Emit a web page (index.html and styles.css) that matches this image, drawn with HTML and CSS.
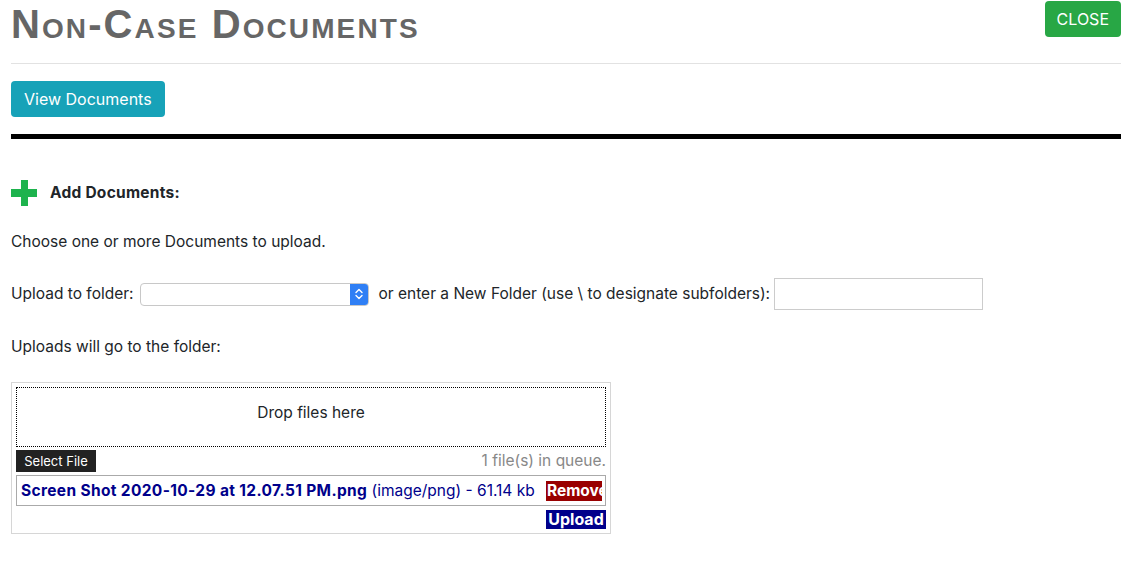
FILE: index.html
```html
<!DOCTYPE html>
<html lang="en">
<head>
  <meta charset="UTF-8" />
  <title>Non-Case Documents</title>
  <link rel="stylesheet" href="styles.css">
</head>
<body>
  <div class="page">
    <div class="header">
      <h1>Non-Case Documents</h1>
      <button class="btn btn-close">CLOSE</button>
    </div>
    <hr class="rule">

    <button class="btn btn-view">View Documents</button>
    <div class="black-bar"></div>

    <div class="add-title">
      <svg class="plus" width="26" height="26" viewBox="0 0 26 26">
        <rect x="10" y="0" width="7" height="26" fill="#1db34d"/>
        <rect x="0" y="9" width="26" height="8" fill="#1db34d"/>
      </svg>
      <span>Add Documents:</span>
    </div>

    <p class="line choose">Choose one or more Documents to upload.</p>

    <div class="folder-row">
      <label>Upload to folder:</label>
      <div class="fake-select">
        <span class="select-arrows">
          <svg width="10" height="14" viewBox="0 0 10 14">
            <path d="M2 5.5 L5 2.5 L8 5.5 M2 8.5 L5 11.5 L8 8.5" fill="none" stroke="#fff" stroke-width="1.4" stroke-linecap="round" stroke-linejoin="round"/>
          </svg>
        </span>
      </div>
      <label class="or-label">or enter a New Folder (use \ to designate subfolders):</label>
      <input type="text" class="new-folder">
    </div>

    <p class="line goes">Uploads will go to the folder:</p>

    <div class="uploader">
      <div class="drop-zone">Drop files here</div>
      <div class="queue-bar">
        <span class="select-file">Select File</span>
        <span class="queue-count">1 file(s) in queue.</span>
      </div>
      <div class="file-row">
        <span class="file-info"><b>Screen Shot 2020-10-29 at 12.07.51 PM.png</b> (image/png) - 61.14 kb</span>
        <span class="remove-btn">Remove</span>
      </div>
      <div class="upload-bar">
        <span class="upload-btn">Upload</span>
      </div>
    </div>
  </div>
</body>
</html>
```

FILE: styles.css
```css
* {
  box-sizing: border-box;
  margin: 0;
  padding: 0;
}

body {
  font-family: Inter, "Liberation Sans", sans-serif;
  font-size: 15.5px;
  line-height: 24px;
  color: #212529;
  background: #fff;
}

.page {
  padding: 0 27px 0 11px;
}

.header {
  display: flex;
  justify-content: space-between;
  align-items: flex-start;
}

.header h1 {
  font-family: "Liberation Sans", Arial, sans-serif;
  font-size: 40px;
  line-height: 48px;
  font-weight: bold;
  font-variant: small-caps;
  letter-spacing: 2.1px;
  color: #666;
}

.btn {
  font-family: inherit;
  font-size: 16px;
  line-height: 24px;
  color: #fff;
  border: none;
  border-radius: 4px;
  padding: 6px 12px;
}

.btn-close {
  background: #28a745;
  margin-top: 1px;
  padding: 6px 12px;
}

.rule {
  border: none;
  border-top: 1px solid #e2e2e2;
  margin-top: 15px;
}

.btn-view {
  background: #17a2b8;
  margin-top: 17px;
  display: block;
  padding: 6px 13px;
}

.black-bar {
  height: 5px;
  background: #000;
  margin-top: 17px;
}

.add-title {
  display: flex;
  align-items: center;
  gap: 13px;
  margin-top: 41px;
  font-weight: bold;
  letter-spacing: 0.25px;
}

.plus {
  display: block;
}

.choose {
  margin-top: 24px;
}

.folder-row {
  display: flex;
  align-items: center;
  margin-top: 24px;
}

.fake-select {
  width: 229px;
  height: 23px;
  border: 1px solid #c8c8c8;
  border-radius: 4px;
  margin-left: 6px;
  display: flex;
  justify-content: flex-end;
  overflow: hidden;
}

.select-arrows {
  width: 19px;
  height: 23px;
  margin: -1px -1px 0 0;
  background: #2f7ff5;
  border-radius: 0 4px 4px 0;
  display: flex;
  align-items: center;
  justify-content: center;
}

.or-label {
  margin-left: 10px;
}

.new-folder {
  width: 209px;
  height: 32px;
  border: 1px solid #ccc;
  margin-left: 4px;
}

.goes {
  margin-top: 25px;
}

.uploader {
  width: 600px;
  margin-top: 23px;
  border: 1px solid #d6d6d6;
  padding: 4px;
}

.drop-zone {
  height: 60px;
  border: 1px dotted #000;
  text-align: center;
  padding-top: 13px;
}

.queue-bar {
  display: flex;
  justify-content: space-between;
  align-items: center;
  margin-top: 3px;
}

.select-file {
  background: #222;
  color: #fff;
  font-size: 13px;
  line-height: 22px;
  width: 80px;
  text-align: center;
}

.queue-count {
  color: #888;
  line-height: 22px;
}

.file-row {
  display: flex;
  justify-content: space-between;
  align-items: center;
  height: 31px;
  margin-top: 3px;
  border: 1px solid #aaa;
  padding: 0 3px 0 4px;
  color: #00008b;
}

.file-info b {
  letter-spacing: 0.35px;
}

.remove-btn {
  background: #990000;
  color: #fff;
  font-weight: bold;
  line-height: 20px;
  width: 56px;
  overflow: hidden;
  white-space: nowrap;
  padding-left: 1px;
}

.upload-bar {
  display: flex;
  justify-content: flex-end;
  margin-top: 4px;
}

.upload-btn {
  background: #00008b;
  color: #fff;
  font-weight: bold;
  font-size: 16px;
  line-height: 19px;
  width: 60px;
  text-align: center;
}
```
